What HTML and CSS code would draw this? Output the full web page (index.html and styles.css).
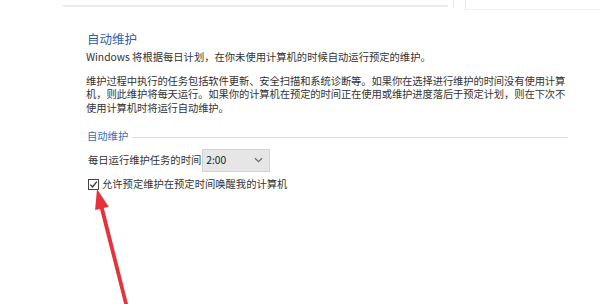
FILE: index.html
```html
<!DOCTYPE html>
<html lang="zh-CN">
<head>
<meta charset="utf-8">
<title>自动维护</title>
<link rel="stylesheet" href="styles.css">
</head>
<body>
<div class="page">
  <div class="top-strip">
    <div class="card-a"></div>
    <div class="divider"></div>
    <div class="card-b"></div>
  </div>
  <div class="content">
    <h1 class="title">自动维护</h1>
    <p class="intro">Windows 将根据每日计划，在你未使用计算机的时候自动运行预定的维护。</p>
    <p class="desc">维护过程中执行的任务包括软件更新、安全扫描和系统诊断等。如果你在选择进行维护的时间没有使用计算<br>机，则此维护将每天运行。如果你的计算机在预定的时间正在使用或维护进度落后于预定计划，则在下次不<br>使用计算机时将运行自动维护。</p>
    <div class="group">
      <span class="group-label">自动维护</span>
      <span class="group-line"></span>
    </div>
    <div class="time-row">
      <span class="time-label">每日运行维护任务的时间</span>
      <div class="select">
        <span class="select-value">2:00</span>
        <svg class="chev" width="9" height="6" viewBox="0 0 9 6"><path d="M1 1.2 L4.5 4.6 L8 1.2" fill="none" stroke="#6b6b6b" stroke-width="1.2"/></svg>
      </div>
    </div>
    <label class="check-row">
      <span class="checkbox">
        <svg width="9" height="9" viewBox="0 0 9 9"><path d="M1.3 4.6 L3.6 6.9 L7.8 1.6" fill="none" stroke="#333" stroke-width="1.3"/></svg>
      </span>
      <span class="check-text">允许预定维护在预定时间唤醒我的计算机</span>
    </label>
  </div>
  <svg class="arrow" width="600" height="304" viewBox="0 0 600 304">
    <polygon points="97,189 108.7,206.7 103.8,207.9 129.5,310 125.7,310 100,208.9 95.1,210.1" fill="#e5333b"/>
  </svg>
</div>
</body>
</html>
```
FILE: styles.css
```css
html, body {
  margin: 0;
  padding: 0;
  background: #ffffff;
}
body {
  font-family: "Noto Sans CJK SC", "Noto Sans", sans-serif;
  color: #333333;
}
.page {
  position: relative;
  width: 600px;
  height: 304px;
  overflow: hidden;
}
.top-strip {
  display: flex;
  align-items: flex-start;
  height: 12px;
}
.card-a {
  margin-left: 63px;
  width: 385px;
  height: 5px;
  border-bottom: 2px solid #ebebeb;
}
.divider {
  margin-left: 5px;
  width: 1px;
  height: 8px;
  background: #ececec;
}
.card-b {
  margin-left: 11px;
  flex: 1;
  height: 9px;
  border-left: 1px solid #e9e9e9;
  border-bottom: 1px solid #f2f2f2;
}
.content {
  padding: 0 32px 0 86px;
}
.title {
  margin: 19px 0 0 1px;
  font-size: 12.5px;
  line-height: 16px;
  font-weight: normal;
  color: #2f5fac;
}
.intro {
  margin: 3px 0 0 0;
  font-size: 10.3px;
  line-height: 14px;
}
.desc {
  margin: 9.5px 0 0 0;
  font-size: 10.3px;
  line-height: 13.5px;
  white-space: nowrap;
  letter-spacing: -0.1px;
}
.group {
  display: flex;
  align-items: center;
  margin-top: 15px;
  height: 14px;
}
.group-label {
  margin-left: 1px;
  font-size: 10.3px;
  line-height: 14px;
  color: #3a6cbc;
}
.group-line {
  flex: 1;
  height: 1px;
  margin-left: 4px;
  margin-top: 3px;
  background: #dcdcdc;
}
.time-row {
  display: flex;
  align-items: center;
  margin-top: 5px;
  height: 24px;
}
.time-label {
  margin-left: 2px;
  font-size: 10.3px;
  line-height: 14px;
}
.select {
  display: flex;
  align-items: center;
  justify-content: space-between;
  box-sizing: border-box;
  width: 68px;
  height: 23px;
  margin-left: 1px;
  padding: 0 6px 0 3px;
  background: #e6e6e6;
  border: 1px solid #d2d2d2;
}
.select-value {
  font-size: 10.3px;
  line-height: 14px;
  color: #222;
}
.check-row {
  display: flex;
  align-items: center;
  margin-top: 5px;
  height: 14px;
}
.checkbox {
  display: flex;
  align-items: center;
  justify-content: center;
  box-sizing: border-box;
  width: 11px;
  height: 11px;
  margin-left: 2px;
  border: 1px solid #444;
  background: #fff;
}
.check-text {
  margin-left: 3px;
  font-size: 10.3px;
  line-height: 14px;
}
.arrow {
  position: absolute;
  left: 0;
  top: 0;
}
```
